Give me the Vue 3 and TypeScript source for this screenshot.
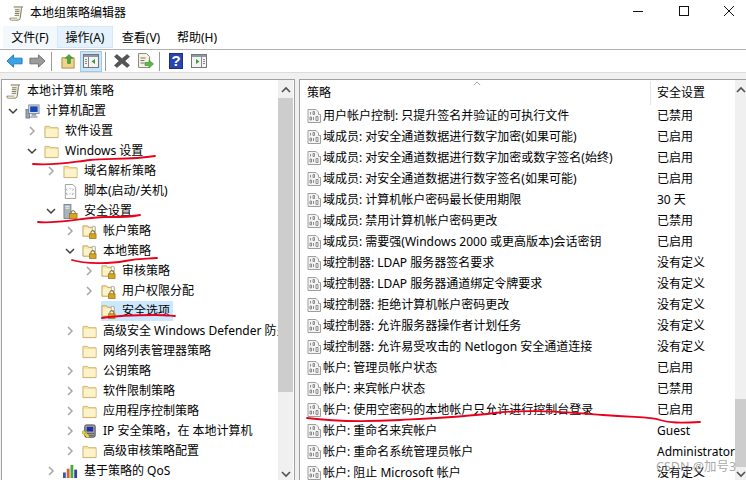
<script setup lang="ts">
interface TreeRow { label: string; depth: number; arrow?: 'open' | 'closed'; icon: string; selected?: boolean }
const tree: TreeRow[] = [
  { label: '本地计算机 策略', depth: 0, icon: 'scroll' },
  { label: '计算机配置', depth: 1, arrow: 'open', icon: 'computer' },
  { label: '软件设置', depth: 2, arrow: 'closed', icon: 'folder' },
  { label: 'Windows 设置', depth: 2, arrow: 'open', icon: 'folder' },
  { label: '域名解析策略', depth: 3, arrow: 'closed', icon: 'folder' },
  { label: '脚本(启动/关机)', depth: 3, icon: 'script' },
  { label: '安全设置', depth: 3, arrow: 'open', icon: 'server' },
  { label: '帐户策略', depth: 4, arrow: 'closed', icon: 'lockfolder' },
  { label: '本地策略', depth: 4, arrow: 'open', icon: 'lockfolder' },
  { label: '审核策略', depth: 5, arrow: 'closed', icon: 'lockfolder' },
  { label: '用户权限分配', depth: 5, arrow: 'closed', icon: 'lockfolder' },
  { label: '安全选项', depth: 5, icon: 'lockfolder', selected: true },
  { label: '高级安全 Windows Defender 防火墙', depth: 4, arrow: 'closed', icon: 'folder' },
  { label: '网络列表管理器策略', depth: 4, icon: 'folder' },
  { label: '公钥策略', depth: 4, arrow: 'closed', icon: 'folder' },
  { label: '软件限制策略', depth: 4, arrow: 'closed', icon: 'folder' },
  { label: '应用程序控制策略', depth: 4, arrow: 'closed', icon: 'folder' },
  { label: 'IP 安全策略，在 本地计算机', depth: 4, arrow: 'closed', icon: 'ip' },
  { label: '高级审核策略配置', depth: 4, arrow: 'closed', icon: 'folder' },
  { label: '基于策略的 QoS', depth: 3, arrow: 'closed', icon: 'qos' }
]
const policies: [string, string][] = [
  ['用户帐户控制: 只提升签名并验证的可执行文件', '已禁用'],
  ['域成员: 对安全通道数据进行数字加密(如果可能)', '已启用'],
  ['域成员: 对安全通道数据进行数字加密或数字签名(始终)', '已启用'],
  ['域成员: 对安全通道数据进行数字签名(如果可能)', '已启用'],
  ['域成员: 计算机帐户密码最长使用期限', '30 天'],
  ['域成员: 禁用计算机帐户密码更改', '已禁用'],
  ['域成员: 需要强(Windows 2000 或更高版本)会话密钥', '已启用'],
  ['域控制器: LDAP 服务器签名要求', '没有定义'],
  ['域控制器: LDAP 服务器通道绑定令牌要求', '没有定义'],
  ['域控制器: 拒绝计算机帐户密码更改', '没有定义'],
  ['域控制器: 允许服务器操作者计划任务', '没有定义'],
  ['域控制器: 允许易受攻击的 Netlogon 安全通道连接', '没有定义'],
  ['帐户: 管理员帐户状态', '已启用'],
  ['帐户: 来宾帐户状态', '已禁用'],
  ['帐户: 使用空密码的本地帐户只允许进行控制台登录', '已启用'],
  ['帐户: 重命名来宾帐户', 'Guest'],
  ['帐户: 重命名系统管理员帐户', 'Administrator'],
  ['帐户: 阻止 Microsoft 帐户', '没有定义']
]
const menus = ['文件(F)', '操作(A)', '查看(V)', '帮助(H)']
</script>

<template>
  <div class="win">
    <svg class="defs" width="0" height="0" aria-hidden="true">
      <symbol id="i-scroll" viewBox="0 0 16 16">
        <path d="M5 1h9.500c-1 .5-1.300 1.500-1.300 2.500L12 12.500c-.2 1.500-1 2.500-2 2.500H2.500c-1 0-1.700-.7-1.500-2h7.500" fill="#f6f2dc" stroke="#6d6d5d" />
        <path d="M1.500 13.200h7.200c0 1 0 1.400-.6 1.600H2.500z" fill="#e8dfb5" />
        <path d="M6.500 4h4.800M6.300 6h4.800M6.100 8h4.800M5.900 10h4.800" stroke="#77766a" />
      </symbol>
      <symbol id="i-computer" viewBox="0 0 16 16">
        <rect x="1" y="6" width="4" height="9" fill="#9aa5b3" stroke="#55606d" stroke-width=".7" />
        <rect x="4" y="1" width="11" height="9" fill="#d9e2ec" stroke="#68727e" stroke-width=".8" />
        <rect x="5.500" y="2.500" width="8" height="6" fill="#1846b5" />
        <path d="M7 10.500h5v2H7z" fill="#98a3ae" />
        <path d="M6 13h7v1.500H6z" fill="#c4ccd4" stroke="#778" stroke-width=".4" />
      </symbol>
      <symbol id="i-folder" viewBox="0 0 16 16">
        <path d="M1 2.500h5l1 1.500h8v10.500H1z" fill="#fbe9a8" stroke="#c8ae6f" />
        <path d="M2 5.500h12.500v8H2z" fill="#fdf3cb" />
        <path d="M1.500 3h4.200l.8 1.500H1.500z" fill="#f4dc94" />
      </symbol>
      <symbol id="i-lockfolder" viewBox="0 0 16 16">
        <path d="M1 2h5l1 1.500h7V13H1z" fill="#fbe9a8" stroke="#b89e62" />
        <path d="M2 5h11v7H2z" fill="#fdf3cb" />
        <path d="M11 2.500h3v5h-3z" fill="#fff" stroke="#9a9a8f" stroke-width=".7" />
        <path d="M9.500 10.500v-1.500a2 2 0 0 1 4 0v1.500" fill="none" stroke="#6b5a2b" />
        <rect x="8" y="10.500" width="7" height="5" fill="#d9a520" stroke="#8a6a14" stroke-width=".7" />
      </symbol>
      <symbol id="i-script" viewBox="0 0 16 16">
        <path d="M2.500 .5h8l3 3v12h-11z" fill="#fbfbfb" stroke="#9c9c9c" />
        <path d="M4.500 5l-1 1 1 1M7 5h1M10 5l1 1-1 1M4.500 9.500l-1 1 1 1M7 10.500h1M10 9.500l1 1-1 1" fill="none" stroke="#6f7f8f" stroke-width=".8" />
      </symbol>
      <symbol id="i-server" viewBox="0 0 16 16">
        <rect x="1" y=".5" width="7.500" height="15" fill="#aab4bd" stroke="#5f6870" stroke-width=".7" />
        <path d="M2.500 2.500h4.500M2.500 4.500h4.500" stroke="#eef2f5" />
        <path d="M8.500 10.500v-1.500a2.300 2.300 0 0 1 4.500 0v1.500" fill="none" stroke="#6b5a2b" />
        <rect x="7" y="10" width="8" height="5.500" fill="#d9a520" stroke="#8a6a14" stroke-width=".7" />
      </symbol>
      <symbol id="i-ip" viewBox="0 0 16 16">
        <rect x="3" y="1" width="11" height="13" rx="1.500" fill="#a9a9a6" stroke="#3e3e3e" />
        <rect x="5" y="3" width="7" height="5" fill="#1e2fa8" />
        <path d="M5 10h8M5 12h8" stroke="#585858" />
        <path d="M1 8l6 6" stroke="#efd631" stroke-width="2.400" />
        <circle cx="2" cy="9" r="1.800" fill="#efd631" stroke="#8f7e10" stroke-width=".5" />
      </symbol>
      <symbol id="i-qos" viewBox="0 0 16 16">
        <rect x="0" y="9" width="3" height="6" fill="#2a5fb0" />
        <rect x="4" y="5" width="3" height="10" fill="#d9622b" />
        <rect x="8" y="1" width="3" height="14" fill="#49a845" />
        <rect x="12" y="6" width="3" height="9" fill="#3a3f9e" />
      </symbol>
      <symbol id="i-policy" viewBox="0 0 14 14">
        <path d="M1 .5h8l2.500 2.500v2.500h2v8H1z" fill="#f4f4f4" stroke="#9e9e9e" />
        <path d="M3.500 3v2.500M6 2.500h1.500v3H6zM3 8h1.500v3H3zM6.500 8v3M9 7.500h2v4H9z" fill="none" stroke="#8c8c8c" />
      </symbol>
    </svg>

    <header class="title">
      <svg class="ico16"><use href="#i-scroll" /></svg>
      <span class="title-text">本地组策略编辑器</span>
      <div class="caption">
        <svg width="10" height="10" viewBox="0 0 10 10"><path d="M0 5.500h10" stroke="#111" /></svg>
        <svg width="10" height="10" viewBox="0 0 10 10"><rect x=".5" y=".5" width="9" height="9" fill="none" stroke="#111" /></svg>
        <svg width="10" height="10" viewBox="0 0 10 10"><path d="M0 0l10 10M10 0L0 10" stroke="#111" /></svg>
      </div>
    </header>

    <nav class="menu">
      <span v-for="(m, i) in menus" :key="m" class="menu-item" :class="{ soft: i === 0, active: i === 1 }">{{ m }}</span>
    </nav>

    <div class="toolbar">
      <button class="tool">
        <svg width="17" height="16" viewBox="0 0 18 16"><path d="M1 8l7-6.500V5h9v6H8v3.500z" fill="#3aa3e6" stroke="#2477b5" /></svg>
      </button>
      <button class="tool">
        <svg width="17" height="16" viewBox="0 0 18 16"><path d="M17 8l-7-6.500V5H1v6h9v3.500z" fill="#9b9b9b" stroke="#6f6f6f" /></svg>
      </button>
      <i class="sep" />
      <button class="tool">
        <svg width="15" height="15" viewBox="0 0 16 16"><path d="M1 4h13v11H1z" fill="#efd48b" stroke="#a98a44" /><path d="M7 10V4.500H4.500L8.500 .5l4 4H10V10z" fill="#4aaa3f" stroke="#2d7a29" stroke-width=".6" /></svg>
      </button>
      <button class="tool on">
        <svg width="16" height="14" viewBox="0 0 16 14"><rect x=".5" y=".5" width="15" height="13" fill="#f4f4f4" stroke="#777" /><path d="M1 1h14v2H1z" fill="#8a9aa6" /><path d="M5.500 3v10M2 5.500h2M2 7.500h2M2 9.500h2" stroke="#888" /><path d="M12 5v5L8.500 7.500z" fill="#3d9c3d" /></svg>
      </button>
      <i class="sep" />
      <button class="tool">
        <svg width="16" height="16" viewBox="0 0 17 16"><path d="M3 1l5.500 4.500L14 1l2.500 2.500L11.500 8l5 4.500L14 15 8.500 10.500 3 15 .5 12.500l5-4.500-5-4.500z" fill="#555" stroke="#3a3a3a" stroke-width=".6" /></svg>
      </button>
      <button class="tool">
        <svg width="17" height="16" viewBox="0 0 17 16"><path d="M1.500.5h8l3 3v11h-11z" fill="#f7f3e2" stroke="#8b8b80" /><path d="M3.500 5h5M3.500 7.500h4M3.500 10h4" stroke="#777" /><path d="M8 9.500h4V7l4.500 4-4.500 4v-2.500H8z" fill="#5cb84a" stroke="#3a8a2e" stroke-width=".6" /></svg>
      </button>
      <i class="sep" />
      <button class="tool">
        <svg width="14" height="16" viewBox="0 0 14 16"><rect x=".5" y=".5" width="13" height="15" fill="#2b45b0" stroke="#1d2f80" /><text x="7" y="13" text-anchor="middle" class="q">?</text></svg>
      </button>
      <button class="tool">
        <svg width="16" height="14" viewBox="0 0 16 14"><rect x=".5" y=".5" width="15" height="13" fill="#f4f4f4" stroke="#777" /><path d="M1 1h14v2H1z" fill="#8a9aa6" /><path d="M10.500 3v10M12 5.500h2M12 7.500h2M12 9.500h2" stroke="#888" /><path d="M5 5v5l3.500-2.500z" fill="#3d9c3d" /></svg>
      </button>
    </div>

    <div class="gutter" />

    <main class="panes">
      <section class="left">
        <div class="tree">
          <div v-for="r in tree" :key="r.label" class="tnode" :style="{ paddingLeft: r.depth * 19 + 'px' }">
            <span class="arrow">
              <svg v-if="r.arrow === 'open'" width="10" height="10" viewBox="0 0 10 10"><path d="M1 3l4 4 4-4" fill="none" stroke="#404040" stroke-width="1.500" /></svg>
              <svg v-else-if="r.arrow === 'closed'" width="10" height="10" viewBox="0 0 10 10"><path d="M3 1l4 4-4 4" fill="none" stroke="#a6a6a6" stroke-width="1.500" /></svg>
            </span>
            <span class="tcell" :class="{ sel: r.selected }">
              <svg class="ico16"><use :href="'#i-' + r.icon" /></svg>
              <span class="tlabel">{{ r.label }}</span>
            </span>
          </div>
        </div>
        <div class="sbar">
          <svg class="sarrow" width="10" height="8" viewBox="0 0 10 8"><path d="M1 6l4-4 4 4" fill="none" stroke="#505050" stroke-width="1.600" /></svg>
          <div class="sthumb left-thumb" />
          <svg class="sarrow end" width="10" height="8" viewBox="0 0 10 8"><path d="M1 2l4 4 4-4" fill="none" stroke="#505050" stroke-width="1.600" /></svg>
        </div>
      </section>

      <section class="right">
        <div class="rbody">
          <div class="rhead">
            <span class="cname">策略</span>
            <span class="cval">安全设置</span>
            <svg class="sort" width="8" height="5" viewBox="0 0 10 5"><path d="M1 4.500l4-4 4 4" fill="none" stroke="#8a8a8a" /></svg>
          </div>
          <div v-for="p in policies" :key="p[0]" class="prow">
            <svg class="ico14"><use href="#i-policy" /></svg>
            <span class="pname">{{ p[0] }}</span>
            <span class="pval">{{ p[1] }}</span>
          </div>
        </div>
        <div class="sbar narrow">
          <svg class="sarrow" width="10" height="8" viewBox="0 0 10 8"><path d="M1 6l4-4 4 4" fill="none" stroke="#505050" stroke-width="1.600" /></svg>
          <div class="sthumb right-thumb" />
          <svg class="sarrow end" width="10" height="8" viewBox="0 0 10 8"><path d="M1 2l4 4 4-4" fill="none" stroke="#505050" stroke-width="1.600" /></svg>
        </div>
      </section>
    </main>

    <div class="mark">CSDN @加号3</div>

    <svg class="ink" width="746" height="480" viewBox="0 0 746 480" fill="none" stroke="#e8001c" stroke-width="1.800" stroke-linecap="round">
      <path d="M33 164C55 166 72 162 90 160S130 160 155 156" />
      <path d="M38 222C60 224 85 217 105 217S130 217 140 215" />
      <path d="M72 260C85 264 110 264 125 261S145 259 157 258" />
      <path d="M102 318C120 315 140 315 155 315S170 316 175 316" />
      <path d="M307 418C330 421 362 422 400 420S462 417 495 413S560 412 603 415S650 417 660 420S680 423 700 422" />
    </svg>
  </div>
</template>

<style>
html, body { margin: 0; background: #fff; }
</style>

<style scoped>
.win {
  position: relative;
  width: 746px;
  height: 480px;
  overflow: hidden;
  display: flex;
  flex-direction: column;
  background: #fff;
  color: #000;
  font: 12px/20px "Noto Sans", "Noto Sans CJK SC", sans-serif;
}
.defs { position: absolute; }
.ico16 { width: 15px; height: 15px; flex: none; }
.ico14 { width: 14px; height: 14px; flex: none; }
.title { height: 26px; display: flex; align-items: center; padding: 0 0 0 9px; flex: none; }
.title-text { margin-left: 6px; }
.caption { margin-left: auto; display: flex; gap: 35.5px; padding-right: 12px; align-items: center; margin-top: -5px; }
.menu { height: 23px; display: flex; border-bottom: 1px solid #b0b0b8; flex: none; padding-left: 3px; }
.menu-item { width: 56px; height: 22px; padding-top: 1px; display: flex; align-items: center; justify-content: center; box-sizing: border-box; }
.menu-item.soft { background: #f3f8fc; width: 54px; }
.menu-item.active { background: #e6f2fb; border: 1px solid #d3e8f8; }
.toolbar { height: 22px; display: flex; align-items: center; padding-left: 3px; border-bottom: 1px solid #dcdcdc; flex: none; }
.tool { width: 22px; height: 21px; padding: 0; border: 1px solid transparent; background: none; display: flex; align-items: center; justify-content: center; margin-right: 1px; }
.tool.on { background: #cce4f7; border-color: #9ccbee; }
.sep { width: 1px; height: 19px; background: #9a9a9a; margin: 0 5px 0 2px; }
.q { font: bold 15px "Liberation Sans", sans-serif; fill: #fff; }
.gutter { height: 6px; background: #f0f0f0; flex: none; }
.panes { flex: 1; min-height: 0; display: flex; gap: 4px; background: #f0f0f0; padding-left: 1px; }
.left { width: 294px; flex: none; border: 1px solid #a0a0a0; border-bottom: 0; display: flex; background: #fff; box-sizing: border-box; overflow: hidden; }
.tree { flex: 1; min-width: 0; overflow: hidden; padding-top: 1px; }
.tnode { height: 20px; display: flex; align-items: center; white-space: nowrap; margin-left: -15px; }
.arrow { width: 19px; flex: none; display: flex; align-items: center; justify-content: flex-end; padding-right: 7px; box-sizing: border-box; height: 20px; }
.tcell { display: flex; align-items: center; height: 20px; padding-right: 3px; }
.tcell.sel { background: #cce8ff; }
.tlabel { margin-left: 6px; }
.sbar { width: 15px; flex: none; background: #f0f0f0; display: flex; flex-direction: column; align-items: center; padding: 6px 0 2px; box-sizing: border-box; margin-right: 1px; }
.sbar.narrow { width: 11px; margin-right: 0; }
.sarrow { flex: none; }
.sarrow.end { margin-top: auto; }
.sthumb { align-self: stretch; background: #cdcdcd; }
.left-thumb { height: 294px; margin-top: 4px; }
.right-thumb { height: 68px; margin-top: 305px; }
.right { flex: 1; min-width: 0; border-left: 1px solid #a0a0a0; border-top: 1px solid #a0a0a0; display: flex; background: #fff; overflow: hidden; }
.rbody { flex: 1; min-width: 0; overflow: hidden; padding-left: 7px; }
.rhead { position: relative; height: 25px; display: flex; align-items: center; margin-left: -7px; padding-left: 7px; }
.cname { width: 343px; flex: none; }
.cval { border-left: 1px solid #e5e5e5; padding-left: 6px; height: 24px; line-height: 24px; }
.sort { position: absolute; left: 173px; top: 1px; }
.prow { height: 21px; display: flex; align-items: center; white-space: nowrap; }
.pname { width: 332px; margin-left: 2px; flex: none; margin-right: 1px; }
.pval { padding-left: 1px; }
.mark { position: absolute; left: 656px; top: 457px; color: rgba(130,130,130,.7); font-size: 12.500px; white-space: nowrap; }
.ink { position: absolute; left: 0; top: 0; pointer-events: none; }
</style>
